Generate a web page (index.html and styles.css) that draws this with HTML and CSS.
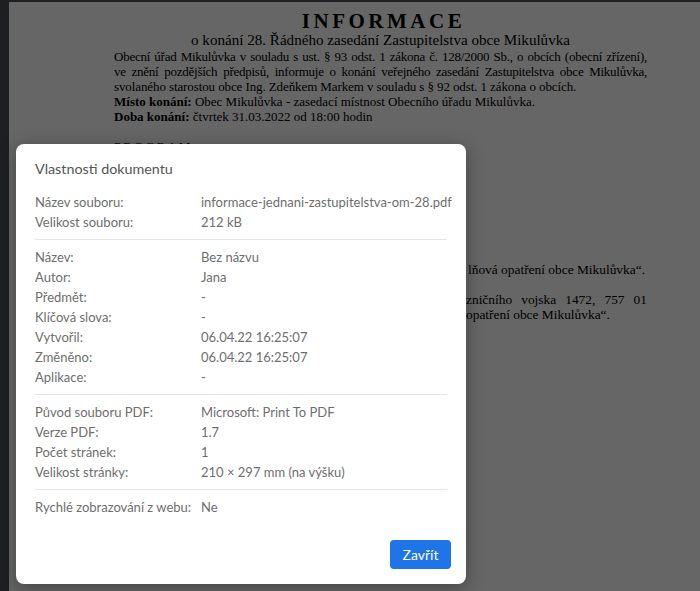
FILE: index.html
```html
<!DOCTYPE html>
<html lang="cs">
<head>
<meta charset="utf-8">
<title>Vlastnosti dokumentu</title>
<link rel="stylesheet" href="styles.css">
</head>
<body>
<div class="viewer">
  <div class="page">
    <h1 class="pdf-title">INFORMACE</h1>
    <p class="pdf-sub">o konání 28. Řádného zasedání Zastupitelstva obce Mikulůvka</p>
    <div class="pdf-body">
      <p class="jl">Obecní úřad Mikulůvka v souladu s ust. § 93 odst. 1 zákona č. 128/2000 Sb., o obcích (obecní zřízení),</p>
      <p class="jl">ve znění pozdějších předpisů, informuje o konání veřejného zasedání Zastupitelstva obce Mikulůvka,</p>
      <p class="pl tight">svolaného starostou obce Ing. Zdeňkem Markem v souladu s § 92 odst. 1 zákona o obcích.</p>
      <p class="pl"><b>Místo konání:</b> Obec Mikulůvka - zasedací místnost Obecního úřadu Mikulůvka.</p>
      <p class="pl"><b>Doba konání:</b> čtvrtek 31.03.2022 od 18:00 hodin</p>
    </div>
    <p class="pdf-program">PROGRAM</p>
    <div class="pdf-items">
      <p class="item right">lňová opatření obce Mikulůvka“.</p>
      <p class="item just">zničního vojska 1472, 757 01</p>
      <p class="item last">opatření obce Mikulůvka“.</p>
    </div>
  </div>
</div>
<div class="overlay"></div>
<div class="dialog">
  <h2 class="dialog-title">Vlastnosti dokumentu</h2>
  <div class="group">
    <div class="row"><span class="label">Název souboru:</span><span class="value">informace-jednani-zastupitelstva-om-28.pdf</span></div>
    <div class="row"><span class="label">Velikost souboru:</span><span class="value">212 kB</span></div>
  </div>
  <div class="sep"></div>
  <div class="group">
    <div class="row"><span class="label">Název:</span><span class="value">Bez názvu</span></div>
    <div class="row"><span class="label">Autor:</span><span class="value">Jana</span></div>
    <div class="row"><span class="label">Předmět:</span><span class="value">-</span></div>
    <div class="row"><span class="label">Klíčová slova:</span><span class="value">-</span></div>
    <div class="row"><span class="label">Vytvořil:</span><span class="value">06.04.22 16:25:07</span></div>
    <div class="row"><span class="label">Změněno:</span><span class="value">06.04.22 16:25:07</span></div>
    <div class="row"><span class="label">Aplikace:</span><span class="value">-</span></div>
  </div>
  <div class="sep"></div>
  <div class="group">
    <div class="row"><span class="label">Původ souboru PDF:</span><span class="value">Microsoft: Print To PDF</span></div>
    <div class="row"><span class="label">Verze PDF:</span><span class="value">1.7</span></div>
    <div class="row"><span class="label">Počet stránek:</span><span class="value">1</span></div>
    <div class="row"><span class="label">Velikost stránky:</span><span class="value">210 × 297 mm (na výšku)</span></div>
  </div>
  <div class="sep"></div>
  <div class="group">
    <div class="row"><span class="label">Rychlé zobrazování z webu:</span><span class="value">Ne</span></div>
  </div>
  <div class="actions">
    <button class="btn-close" type="button">Zavřít</button>
  </div>
</div>
</body>
</html>
```

FILE: styles.css
```css
html, body {
  margin: 0;
  padding: 0;
  width: 700px;
  height: 591px;
  overflow: hidden;
}

body {
  background: #4c4e53;
  position: relative;
}

.viewer {
  padding: 2px 0 0 9px;
  height: 589px;
  overflow: hidden;
}

.page {
  background: #ffffff;
  width: 760px;
  height: 700px;
  box-sizing: border-box;
  padding: 8px 0 0 105px;
  color: #000;
  font-family: "Liberation Serif", "Times New Roman", serif;
}

.page p, .page h1 {
  margin: 0;
}

.pdf-title {
  width: 533px;
  text-align: center;
  font-size: 21px;
  line-height: 22px;
  font-weight: bold;
  letter-spacing: 3.5px;
  padding-left: 6px;
  box-sizing: border-box;
}

.pdf-sub {
  width: 533px;
  text-align: center;
  font-size: 15.1px;
  line-height: 17px;
}

.pdf-body {
  width: 533px;
  font-size: 13px;
  line-height: 15px;
}

.jl {
  text-align: justify;
  text-align-last: justify;
  letter-spacing: -0.25px;
}

.pl {
  white-space: nowrap;
}

.pl.tight {
  letter-spacing: -0.1px;
}

.pdf-program {
  font-size: 13px;
  line-height: 15px;
  margin-top: 15px !important;
  letter-spacing: 2px;
}

.pdf-items {
  width: 181px;
  margin: 108px 0 0 352px;
  font-family: "Liberation Serif", serif;
  font-size: 13.4px;
  line-height: 15px;
}

.item {
  white-space: nowrap;
}

.item.right {
  text-align: right;
  margin-bottom: 15px !important;
  padding-right: 2px;
}

.item.just {
  text-align: justify;
  text-align-last: justify;
}

.overlay {
  position: absolute;
  inset: 0;
  background: rgba(0, 0, 0, 0.6);
}

.dialog {
  position: absolute;
  left: 16px;
  top: 144px;
  width: 450px;
  box-sizing: border-box;
  padding: 15px 19px 15px 19px;
  background: #ffffff;
  border-radius: 8px;
  box-shadow: 0 4px 18px rgba(0, 0, 0, 0.35);
  font-family: Lato, "Noto Sans", sans-serif;
  color: #6e6e6e;
}

.dialog-title {
  margin: 0 0 13px 0;
  font-size: 14.3px;
  line-height: 20px;
  font-weight: normal;
  color: #555555;
}

.group {
  display: flex;
  flex-direction: column;
}

.row {
  display: grid;
  grid-template-columns: 166px 1fr;
  height: 20px;
  line-height: 20px;
  font-size: 13px;
  white-space: nowrap;
}

.sep {
  height: 1px;
  background: #e6e6e8;
  margin: 7px 0;
}

.actions {
  display: flex;
  justify-content: flex-end;
  margin: 23px -4px 0 0;
}

.btn-close {
  width: 61px;
  height: 29px;
  border: none;
  border-radius: 4px;
  background: #1f74e8;
  color: #ffffff;
  font-family: Lato, "Noto Sans", sans-serif;
  font-size: 14px;
  padding: 0;
}
```
